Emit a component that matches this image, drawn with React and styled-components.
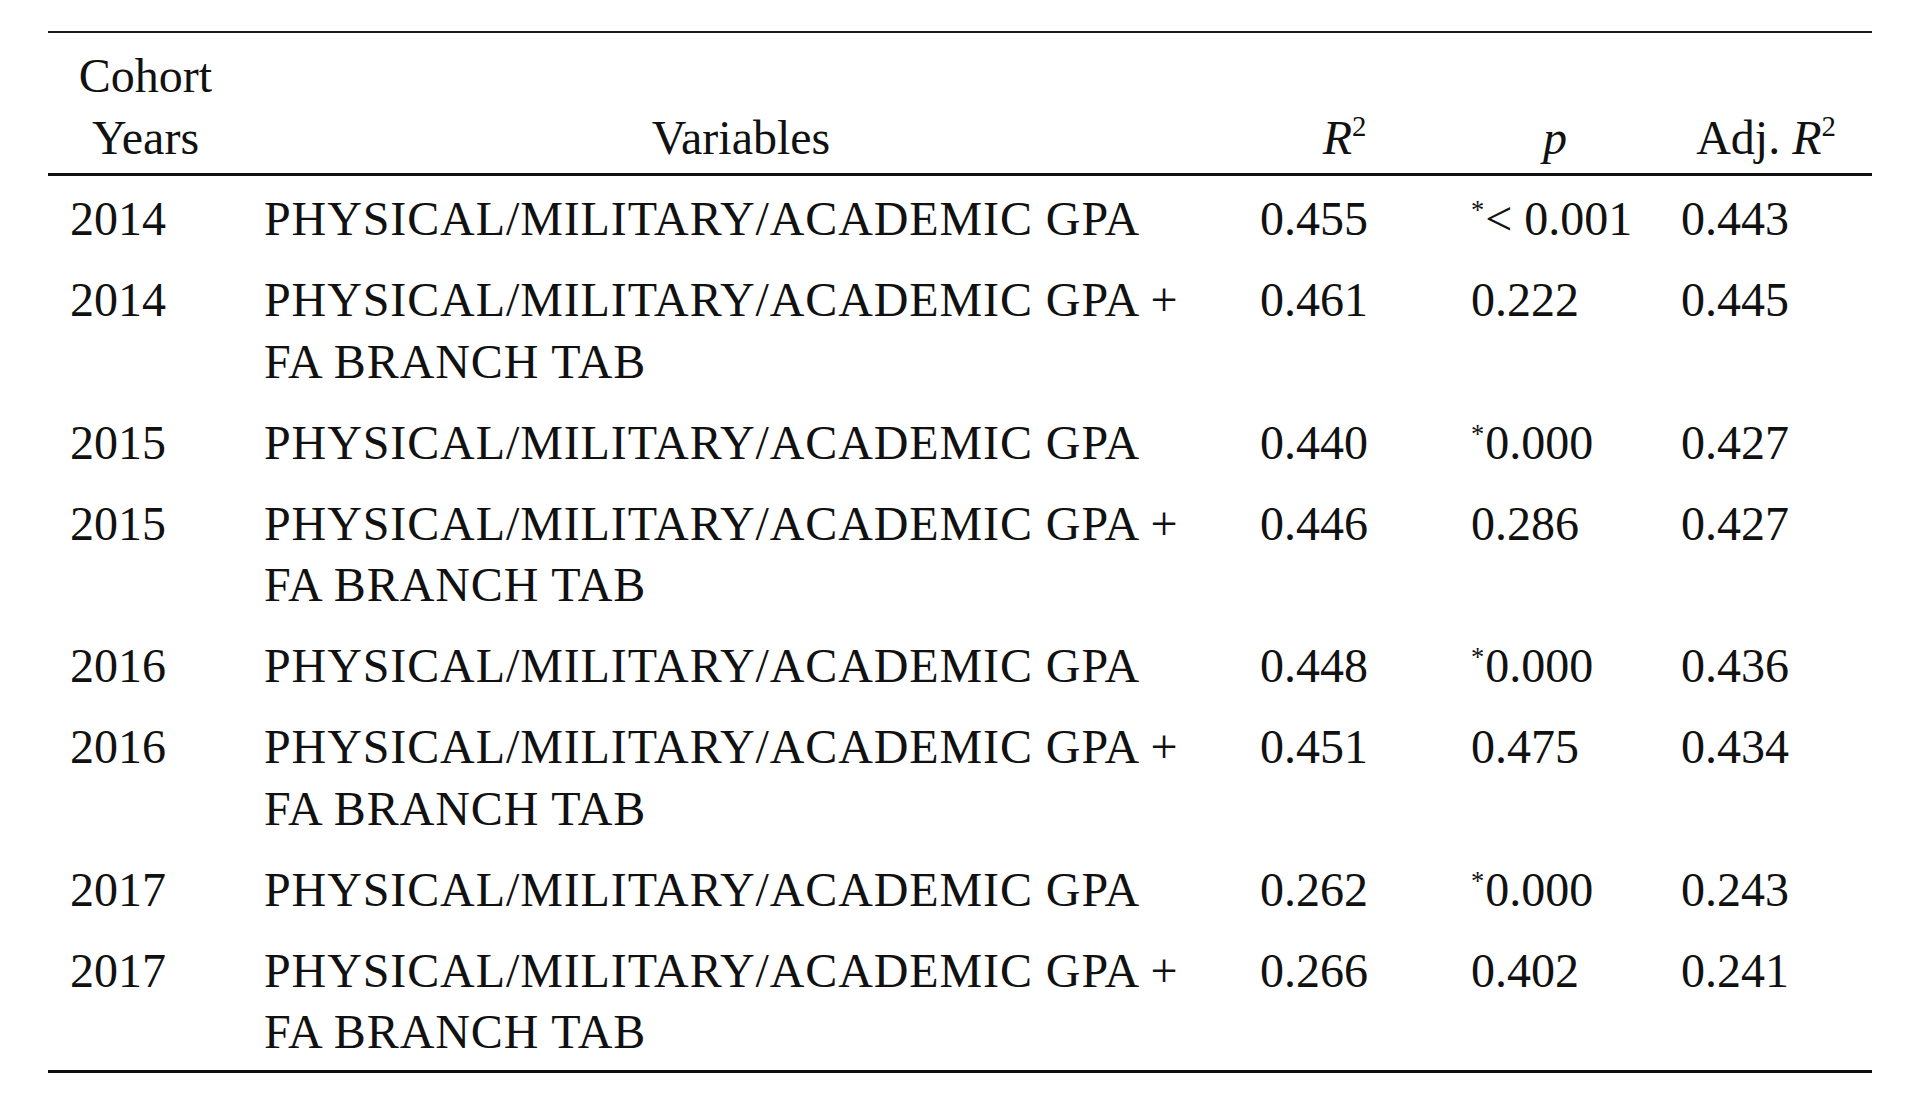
import React from "react";
import styled, { createGlobalStyle } from "styled-components";

const GlobalStyle = createGlobalStyle`
  html, body {
    margin: 0;
    padding: 0;
    background: #ffffff;
  }
  body {
    font-family: "Liberation Serif", "Times New Roman", serif;
    color: #111111;
  }
`;

const Page = styled.div`
  padding: 31px 0 0 48px;
  background: #ffffff;
`;

const Table = styled.table`
  width: 1824px;
  table-layout: fixed;
  border-collapse: collapse;
  font-family: "Liberation Serif", "Times New Roman", serif;
  font-size: 48px;
  line-height: 61.5px;
  color: #111111;
`;

const Head = styled.thead`
  border-top: 2px solid #1a1a1a;
  border-bottom: 3px solid #111111;
`;

const Body = styled.tbody`
  border-bottom: 3px solid #0d0d0d;
`;

const HeadCell = styled.th`
  font-weight: normal;
  text-align: center;
  vertical-align: bottom;
  padding: 12px 0 5px 0;
`;

const Cell = styled.td`
  text-align: left;
  vertical-align: top;
  padding: 12px 8px 7.5px ${(p) => (p.$first ? "22px" : "21px")};
  letter-spacing: ${(p) => (p.$wide ? "0.9px" : "0")};
`;

const Italic = styled.i`
  font-style: italic;
`;

const Sup = styled.sup`
  font-size: 0.6em;
  line-height: 0;
  vertical-align: 0.62em;
`;

const Star = styled.sup`
  font-size: 0.55em;
  line-height: 0;
  vertical-align: 0.6em;
  margin-right: 1px;
`;

const rows = [
  { year: "2014", tab: false, r2: "0.455", p: "< 0.001", star: true, adj: "0.443" },
  { year: "2014", tab: true, r2: "0.461", p: "0.222", star: false, adj: "0.445" },
  { year: "2015", tab: false, r2: "0.440", p: "0.000", star: true, adj: "0.427" },
  { year: "2015", tab: true, r2: "0.446", p: "0.286", star: false, adj: "0.427" },
  { year: "2016", tab: false, r2: "0.448", p: "0.000", star: true, adj: "0.436" },
  { year: "2016", tab: true, r2: "0.451", p: "0.475", star: false, adj: "0.434" },
  { year: "2017", tab: false, r2: "0.262", p: "0.000", star: true, adj: "0.243" },
  { year: "2017", tab: true, r2: "0.266", p: "0.402", star: false, adj: "0.241" },
];

export default function App() {
  return (
    <>
      <GlobalStyle />
      <Page>
        <Table>
          <colgroup>
            <col style={{ width: 195 }} />
            <col style={{ width: 996 }} />
            <col style={{ width: 211 }} />
            <col style={{ width: 210 }} />
            <col style={{ width: 212 }} />
          </colgroup>
          <Head>
            <tr>
              <HeadCell>
                Cohort
                <br />
                Years
              </HeadCell>
              <HeadCell>Variables</HeadCell>
              <HeadCell>
                <Italic>R</Italic>
                <Sup>2</Sup>
              </HeadCell>
              <HeadCell>
                <Italic>p</Italic>
              </HeadCell>
              <HeadCell>
                Adj. <Italic>R</Italic>
                <Sup>2</Sup>
              </HeadCell>
            </tr>
          </Head>
          <Body>
            {rows.map((r, i) => (
              <tr key={i}>
                <Cell $first>{r.year}</Cell>
                <Cell $wide>
                  PHYSICAL/MILITARY/ACADEMIC GPA{r.tab ? " +" : ""}
                  {r.tab && (
                    <>
                      <br />
                      FA BRANCH TAB
                    </>
                  )}
                </Cell>
                <Cell>{r.r2}</Cell>
                <Cell>
                  {r.star && <Star>*</Star>}
                  {r.p}
                </Cell>
                <Cell>{r.adj}</Cell>
              </tr>
            ))}
          </Body>
        </Table>
      </Page>
    </>
  );
}
